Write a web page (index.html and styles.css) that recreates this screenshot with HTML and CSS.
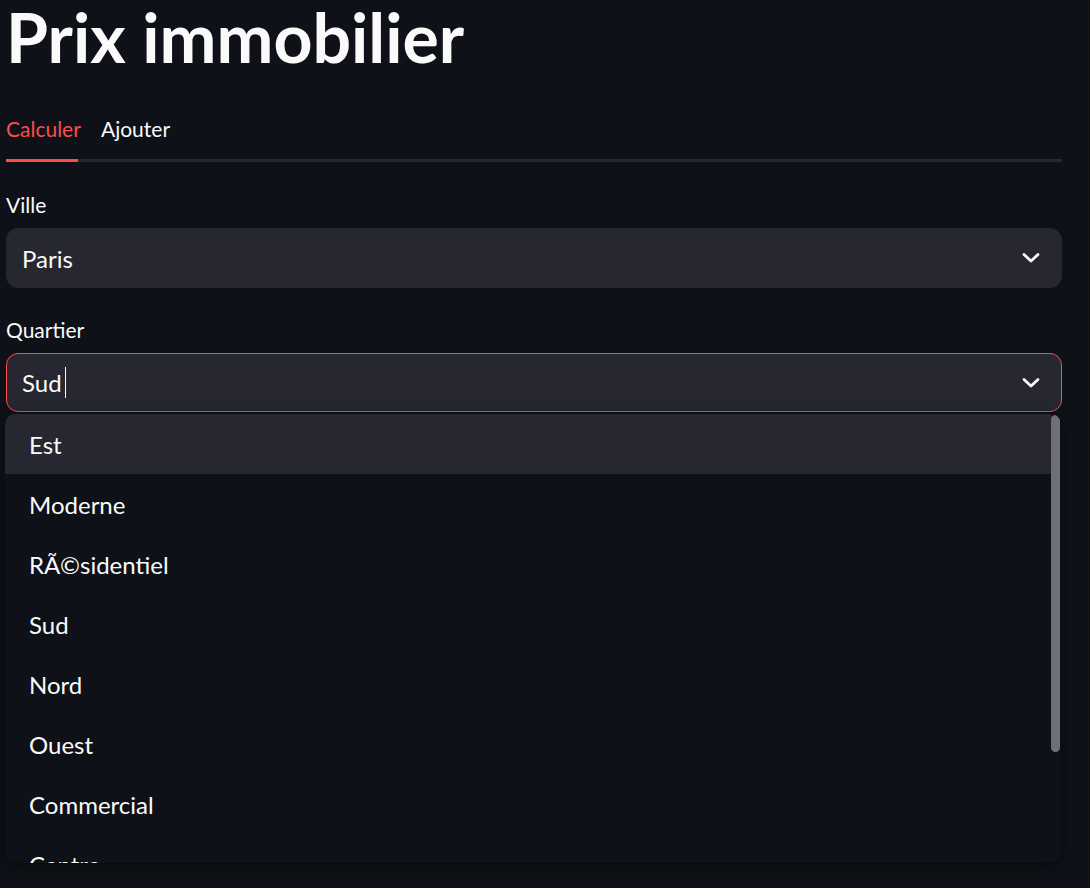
FILE: index.html
```html
<!DOCTYPE html>
<html lang="fr">
<head>
<meta charset="utf-8">
<title>Prix immobilier</title>
<link rel="stylesheet" href="styles.css">
</head>
<body>
<main class="page">
  <h1 class="title">Prix immobilier</h1>

  <div class="tabs">
    <div class="tab-list">
      <div class="tab active">Calculer</div>
      <div class="tab">Ajouter</div>
    </div>
    <div class="tab-rail"><div class="tab-ink"></div></div>
  </div>

  <div class="field">
    <label class="label">Ville</label>
    <div class="select">
      <span class="value">Paris</span>
      <svg class="chev" viewBox="0 0 20 14" width="20" height="14"><polyline points="3,3.5 10,10 17,3.5" fill="none" stroke="#fafafa" stroke-width="2.8" stroke-linecap="round" stroke-linejoin="round"/></svg>
    </div>
  </div>

  <div class="field">
    <label class="label">Quartier</label>
    <div class="select-wrap">
      <div class="select focused">
        <span class="value">Sud<span class="caret"></span></span>
        <svg class="chev" viewBox="0 0 20 14" width="20" height="14"><polyline points="3,3.5 10,10 17,3.5" fill="none" stroke="#fafafa" stroke-width="2.8" stroke-linecap="round" stroke-linejoin="round"/></svg>
      </div>
      <div class="menu">
        <ul class="options">
          <li class="opt hl">Est</li>
          <li class="opt">Moderne</li>
          <li class="opt">RÃ©sidentiel</li>
          <li class="opt">Sud</li>
          <li class="opt">Nord</li>
          <li class="opt">Ouest</li>
          <li class="opt">Commercial</li>
          <li class="opt">Centre</li>
        </ul>
        <div class="scrollbar"><div class="thumb"></div></div>
      </div>
    </div>
  </div>
</main>
</body>
</html>
```
FILE: styles.css
```css
* { box-sizing: border-box; }
html, body {
  margin: 0;
  padding: 0;
  background: #0e1117;
  color: #fafafa;
  font-family: "Lato", "Noto Sans", sans-serif;
  height: 888px;
  overflow: hidden;
}
.page {
  width: 1056px;
  margin-left: 6px;
}
.title {
  margin: 0;
  padding-top: 0;
  font-size: 68px;
  font-weight: 700;
  line-height: 74px;
}
.tabs {
  margin-top: 30px;
}
.tab-list {
  display: flex;
  gap: 21px;
  height: 55px;
  align-items: flex-start;
  padding-top: 10px;
}
.tab {
  font-size: 21px;
  line-height: 30px;
  color: #fafafa;
}
.tab.active { color: #ff4b4b; width: 74px; }
.tab-rail {
  height: 3px;
  background: #262730;
}
.tab-ink {
  width: 72px;
  height: 3px;
  background: #ff4b4b;
}
.field {
  margin-top: 30px;
}
.field + .field { margin-top: 29px; }
.label {
  display: block;
  font-size: 21px;
  line-height: 26px;
  margin-bottom: 10px;
}
.select {
  height: 60px;
  background: #262730;
  border-radius: 12px;
  display: flex;
  align-items: center;
  justify-content: space-between;
  padding: 0 20px 0 15px;
  border: 1.5px solid #262730;
}
.select.focused {
  border-color: #ff4b4b;
  height: 59px;
}
.value {
  font-size: 24px;
  display: flex;
  align-items: center;
}
.caret {
  display: inline-block;
  width: 1.5px;
  height: 31px;
  background: #fafafa;
  margin-left: 3px;
}
.chev { width: 20px; height: 14px; }
.select-wrap { position: relative; }
.menu {
  position: absolute;
  left: -1px;
  top: 61px;
  width: 1056px;
  height: 449px;
  background: #0e1117;
  border-radius: 10px;
  overflow: hidden;
  box-shadow: 0 4px 16px rgba(0,0,0,0.45);
  display: flex;
}
.options {
  list-style: none;
  margin: 0;
  padding: 0;
  flex: 1;
}
.opt {
  height: 60px;
  display: flex;
  align-items: center;
  padding-left: 24px;
  font-size: 24px;
}
.opt.hl { background: #262730; }
.scrollbar {
  width: 10px;
  padding-top: 1px;
}
.thumb {
  width: 9px;
  height: 337px;
  background: #6e7076;
  border-radius: 5px;
}
```
